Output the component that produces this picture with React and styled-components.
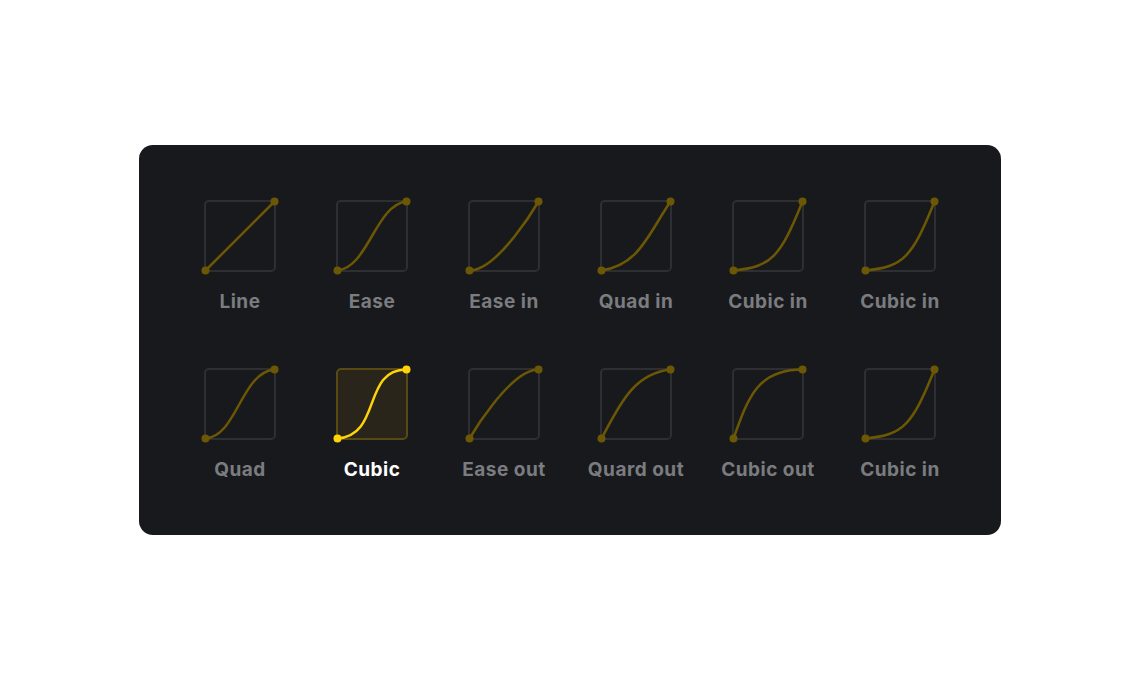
import React from "react";
import styled, { createGlobalStyle } from "styled-components";

const GlobalStyle = createGlobalStyle`
  html, body { margin: 0; padding: 0; background: #ffffff; }
  body { font-family: Inter, "Noto Sans", sans-serif; }
`;

const Page = styled.div`
  min-height: 100vh;
  display: flex;
  align-items: center;
  justify-content: center;
`;

const Panel = styled.div`
  width: 862px;
  height: 390px;
  box-sizing: border-box;
  padding: 55px 35px 54px;
  background: #18191c;
  border-radius: 14px;
  display: grid;
  grid-template-columns: repeat(6, 132px);
  align-content: start;
  row-gap: 55px;
`;

const Item = styled.button`
  appearance: none;
  background: none;
  border: none;
  padding: 0;
  margin: 0;
  display: flex;
  flex-direction: column;
  align-items: center;
  gap: 19px;
  cursor: pointer;
`;

const Label = styled.span`
  font-family: Inter, "Noto Sans", sans-serif;
  font-size: 19px;
  line-height: 22px;
  font-weight: 700;
  letter-spacing: 0.5px;
  color: ${(p) => (p.$active ? "#ffffff" : "#7b7c80")};
  white-space: nowrap;
`;

const Glyph = styled.svg`
  display: block;
  width: 72px;
  height: 72px;
  overflow: visible;
`;

const S = 1.5;
const E = 70.5;
const L = E - S;

function EaseIcon({ b, active }) {
  const [x1, y1, x2, y2] = b;
  const px = (t) => S + t * L;
  const py = (v) => E - v * L;
  const d = `M${px(0)} ${py(0)} C${px(x1)} ${py(y1)} ${px(x2)} ${py(y2)} ${px(1)} ${py(1)}`;
  const c = active ? "#ffd20a" : "#6c5804";
  return (
    <Glyph viewBox="0 0 72 72">
      <rect
        x="1"
        y="1"
        width="70"
        height="70"
        rx="4"
        fill={active ? "#29251a" : "none"}
        stroke={active ? "#584a12" : "#2e2f33"}
        strokeWidth="2"
      />
      <path d={d} fill="none" stroke={c} strokeWidth="2.5" strokeLinecap="round" />
      <circle cx={px(0)} cy={py(0)} r="4" fill={c} />
      <circle cx={px(1)} cy={py(1)} r="4" fill={c} />
    </Glyph>
  );
}

const items = [
  { label: "Line", b: [0, 0, 1, 1] },
  { label: "Ease", b: [0.45, 0.05, 0.55, 0.95] },
  { label: "Ease in", b: [0.42, 0, 1, 1] },
  { label: "Quad in", b: [0.55, 0.085, 0.68, 0.53] },
  { label: "Cubic in", b: [0.55, 0.055, 0.675, 0.19] },
  { label: "Cubic in", b: [0.55, 0.055, 0.675, 0.19] },
  { label: "Quad", b: [0.455, 0.03, 0.515, 0.955] },
  { label: "Cubic", b: [0.645, 0.045, 0.355, 1], active: true },
  { label: "Ease out", b: [0, 0, 0.58, 1] },
  { label: "Quard out", b: [0.25, 0.46, 0.45, 0.94] },
  { label: "Cubic out", b: [0.215, 0.61, 0.355, 1] },
  { label: "Cubic in", b: [0.55, 0.055, 0.675, 0.19] },
];

export default function App() {
  return (
    <>
      <GlobalStyle />
      <Page>
        <Panel>
          {items.map((it, i) => (
            <Item key={i} type="button">
              <EaseIcon b={it.b} active={it.active} />
              <Label $active={it.active}>{it.label}</Label>
            </Item>
          ))}
        </Panel>
      </Page>
    </>
  );
}
